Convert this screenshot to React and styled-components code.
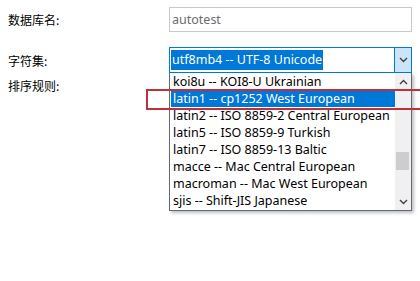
import React from "react";
import styled, { createGlobalStyle } from "styled-components";

const Global = createGlobalStyle`
  html, body { margin: 0; padding: 0; background: #fff; }
  body { font-family: "Noto Sans", "Noto Sans CJK SC", sans-serif; font-size: 12.5px; color: #000; }
`;

const Page = styled.div`
  position: relative;
  width: 420px;
  height: 281px;
  overflow: hidden;
  background: #fff;
`;

const Form = styled.div`
  display: grid;
  grid-template-columns: 161px 243px;
  grid-auto-rows: auto;
  padding: 7px 0 0 8px;
  row-gap: 0;
`;

const Label = styled.div`
  font-family: "Noto Sans CJK SC", sans-serif;
  font-size: 12px;
  display: flex;
  align-items: center;
  height: ${(p) => p.$h}px;
  margin-top: ${(p) => p.$mt || 0}px;
`;

const Field = styled.div`
  height: ${(p) => p.$h}px;
  margin-top: ${(p) => p.$mt || 0}px;
`;

const TextInput = styled.div`
  box-sizing: border-box;
  height: 25px;
  border: 1px solid #c9c9c9;
  display: flex;
  align-items: center;
  padding-left: 2px;
  color: #6d6d6d;
`;

const Select = styled.div`
  box-sizing: border-box;
  height: 26px;
  border: 1px solid #0078d7;
  display: flex;
  align-items: stretch;
  background: #fff;
`;

const SelectValue = styled.div`
  flex: 1;
  display: flex;
  align-items: center;
  padding-left: 1px;
`;

const SelectedText = styled.span`
  background: #0078d7;
  color: #fff;
  height: 20px;
  line-height: 20px;
  padding: 0 1px;
`;

const DropButton = styled.div`
  width: 16px;
  background: #cce4f7;
  border-left: 1px solid #0078d7;
  display: flex;
  align-items: center;
  justify-content: center;
`;

const List = styled.div`
  position: absolute;
  left: 169px;
  top: 73px;
  width: 243px;
  height: 138px;
  box-sizing: border-box;
  border: 1px solid #5f6b77;
  border-top: none;
  background: #fff;
  display: flex;
  box-shadow: 2px 2px 3px rgba(0, 0, 0, 0.25);
`;

const Items = styled.div`
  flex: 1;
  display: flex;
  flex-direction: column;
  padding-left: 1px;
`;

const Item = styled.div`
  height: 17px;
  line-height: 17px;
  padding-left: 2px;
  white-space: nowrap;
  background: ${(p) => (p.$active ? "#0078d7" : "transparent")};
  color: ${(p) => (p.$active ? "#fff" : "#000")};
`;

const Scrollbar = styled.div`
  width: 16px;
  background: #f0f0f0;
  display: flex;
  flex-direction: column;
`;

const ScrollArrow = styled.div`
  height: 17px;
  display: flex;
  align-items: center;
  justify-content: center;
`;

const Track = styled.div`
  flex: 1;
  display: flex;
  flex-direction: column;
  padding-top: ${(p) => p.$offset}px;
`;

const Thumb = styled.div`
  height: 18px;
  margin: 0 2px 0 1px;
  background: #cdcdcd;
`;

const Highlight = styled.div`
  position: absolute;
  left: 146px;
  top: 89px;
  width: 290px;
  height: 21px;
  box-sizing: border-box;
  border: 2px solid #c0303c;
  pointer-events: none;
`;

const Chevron = ({ up }) => (
  <svg width="9" height="6" viewBox="0 0 9 6">
    <polyline
      points={up ? "1,5 4.5,1.5 8,5" : "1,1 4.5,4.5 8,1"}
      fill="none"
      stroke="#404040"
      strokeWidth="1.4"
    />
  </svg>
);

const items = [
  "koi8u -- KOI8-U Ukrainian",
  "latin1 -- cp1252 West European",
  "latin2 -- ISO 8859-2 Central European",
  "latin5 -- ISO 8859-9 Turkish",
  "latin7 -- ISO 8859-13 Baltic",
  "macce -- Mac Central European",
  "macroman -- Mac West European",
  "sjis -- Shift-JIS Japanese",
];

export default function App() {
  return (
    <Page>
      <Global />
      <Form>
        <Label $h={25}>数据库名:</Label>
        <Field $h={25}>
          <TextInput>autotest</TextInput>
        </Field>
        <Label $h={26} $mt={15}>字符集:</Label>
        <Field $h={26} $mt={15}>
          <Select>
            <SelectValue>
              <SelectedText>utf8mb4 -- UTF-8 Unicode</SelectedText>
            </SelectValue>
            <DropButton>
              <Chevron />
            </DropButton>
          </Select>
        </Field>
        <Label $h={20} $mt={2}>排序规则:</Label>
        <Field $h={20} $mt={2} />
      </Form>
      <List>
        <Items>
          {items.map((t, i) => (
            <Item key={t} $active={i === 1}>
              {t}
            </Item>
          ))}
        </Items>
        <Scrollbar>
          <ScrollArrow>
            <Chevron up />
          </ScrollArrow>
          <Track $offset={62}>
            <Thumb />
          </Track>
          <ScrollArrow>
            <Chevron />
          </ScrollArrow>
        </Scrollbar>
      </List>
      <Highlight />
    </Page>
  );
}
